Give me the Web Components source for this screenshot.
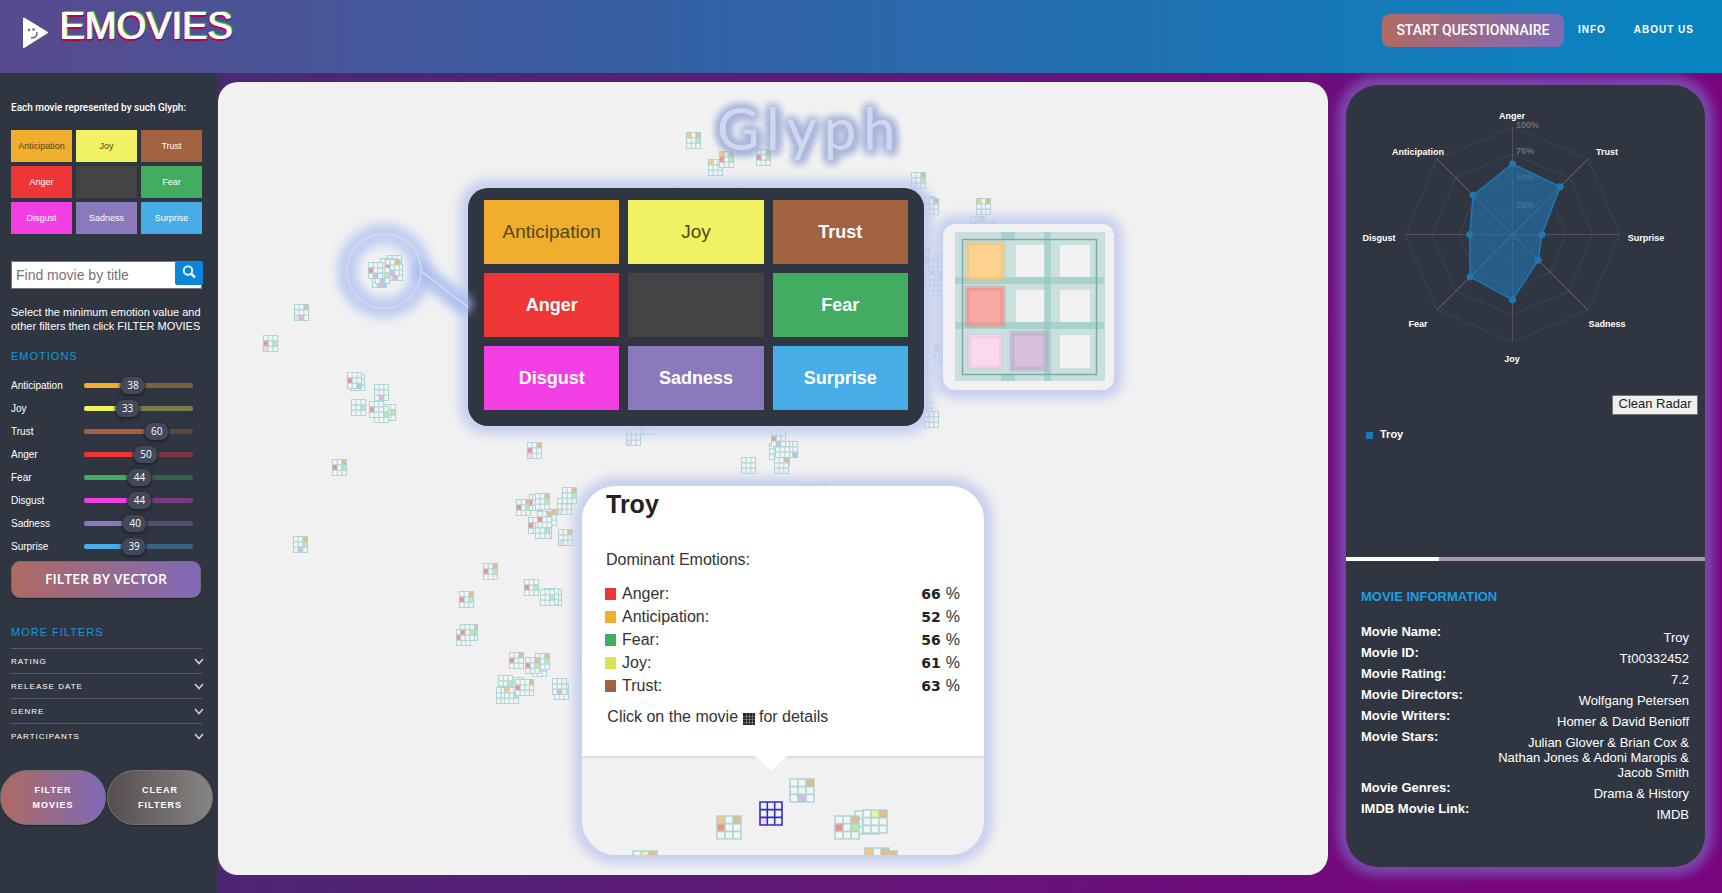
<!DOCTYPE html>
<html lang="en">
<head>
<meta charset="utf-8">
<title>EMOVIES</title>
<style>
  html, body { margin: 0; }
  body { font-family: "Liberation Sans", Arial, sans-serif; color: #fff; }
</style>
</head>
<body>
<emovies-app></emovies-app>

<template id="app">
  <style>
    :host { display: grid; grid-template-rows: 73px 1fr; min-height: 100vh; }
    main { display: grid; grid-template-columns: 217px minmax(0, 1fr) 394px; background: linear-gradient(100deg, #482a72 12%, #78067e 88%); }
    movie-map { margin: 9px 0 18px 1px; }
    .side { padding: 12px 17px 26px 18px; display: grid; }
  </style>
  <app-header></app-header>
  <main>
    <filter-sidebar></filter-sidebar>
    <movie-map></movie-map>
    <div class="side"><movie-panel></movie-panel></div>
  </main>
</template>

<template id="header">
  <style>
    :host { display: flex; justify-content: space-between; align-items: flex-start; position: relative; z-index: 1;
      background: linear-gradient(90deg, #584a8e, #3461a5 40%, #0786c2); }
    .brand { display: flex; align-items: flex-start; gap: 9px; padding-left: 20px; }
    .brand svg { margin-top: 15px; }
    h1 { margin: 6px 0 0; font-size: 38px; line-height: 40px; font-weight: 400;
      text-shadow: 1px 0 0 #fff, -1px 1px 1px #d4003c, 2px -1px 1px #28e628, 2px 1px 1px #2818e0, 0 2px 1px #c8002e; }
    nav { display: flex; align-items: center; padding: 14px 28px 0 0; }
    button { height: 33px; width: 182px; border: 0; border-radius: 8px; color: #fff; background: linear-gradient(90deg, #b06a62, #8069b8);
      font: 500 14px "Roboto", sans-serif; padding: 0 0 2px; white-space: nowrap; }
    a { color: #fff; text-decoration: none; font: bold 10px "Liberation Sans", sans-serif; letter-spacing: 1px; padding-bottom: 2px; }
    .info { margin: 0 28px 0 14px; }
  </style>
  <div class="brand">
    <svg width="30" height="36" viewBox="0 0 30 36" aria-hidden="true">
      <path d="M4 3.500 L27 17.500 L4 32z" fill="#fff" stroke="#fff" stroke-width="2" stroke-linejoin="round"/>
      <circle cx="9" cy="15" r="1.200" fill="#666"/><circle cx="13.500" cy="14.500" r="1.200" fill="#666"/>
      <path d="M11 23q6.500 0 6-6" fill="none" stroke="#555" stroke-width="1.300"/>
    </svg>
    <h1>EMOVIES</h1>
  </div>
  <nav>
    <button type="button">START QUESTIONNAIRE</button>
    <a class="info" href="#info">INFO</a>
    <a href="#about">ABOUT US</a>
  </nav>
</template>

<template id="legend">
  <style>
    :host { display: grid; grid-template-columns: repeat(3, 1fr); grid-auto-rows: var(--cell-height, 32px); gap: var(--cell-gap, 4px);
      font-size: var(--cell-font, 9px); font-weight: var(--cell-weight, 400); }
    div { display: grid; place-items: center; background: var(--c); }
    .dark { color: #54480f; font-weight: 400; font-size: var(--dark-font, 9px); }
  </style>
  <div class="dark" style="--c:#f0ae2f">Anticipation</div><div class="dark" style="--c:#f0f264">Joy</div><div style="--c:#a2623f">Trust</div>
  <div style="--c:#ef3636">Anger</div><div style="--c:#444"></div><div style="--c:#42ac60">Fear</div>
  <div style="--c:#f13fe4">Disgust</div><div style="--c:#8a7abc">Sadness</div><div style="--c:#46ade6">Surprise</div>
</template>

<template id="slider">
  <style>
    :host { display: grid; grid-template-columns: 73px 109px; align-items: center; height: 23px; font-size: 10px; }
    .bar { position: relative; height: 5px; border-radius: 2px;
      background: linear-gradient(90deg, var(--c) calc(7px + var(--v) * 1px), color-mix(in srgb, var(--c) 38%, #303641) 0); }
    input { -webkit-appearance: none; appearance: none; display: block; width: 131px; height: 17px; margin: -6px 0 0 -4px; background: none; }
    input::-webkit-slider-thumb { -webkit-appearance: none; width: 23px; height: 17px; border-radius: 7px; background: #424959; box-shadow: 0 1px 3px 1px #1d212a; }
    output { position: absolute; top: -6px; left: calc(8px + var(--v) * 1.080px); transform: translateX(-50%); font: 10px/17px "Open Sans", sans-serif; pointer-events: none; }
  </style>
  <label for="r"></label>
  <div class="bar"><input id="r" type="range" min="0" max="100"><output for="r"></output></div>
</template>

<template id="sidebar">
  <style>
    :host { display: block; box-sizing: border-box; background: #303641; padding: 26px 0 0; }
    section { padding: 0 15px 0 11px; }
    p { margin: 0; font-size: 11px; line-height: 14px; }
    .intro { font: 500 10px/17px "Roboto", sans-serif; white-space: nowrap; }
    glyph-legend { margin: 14px 0 27px; }
    form { display: flex; height: 28px; margin-bottom: 16px; background: #fff; border-radius: 2px; box-shadow: inset 0 0 0 1px #777; }
    form input { flex: 1; min-width: 0; border: 0; background: none; padding: 0 5px; font: 14px "Liberation Sans", sans-serif; }
    form input::placeholder { color: #757575; }
    form button { width: 28px; height: 24px; border: 0; border-radius: 2px; background: #0986da; padding: 0 0 2px; display: grid; place-items: center; margin-right: -1px; }
    h2 { margin: 0; font-size: 11px; line-height: 16px; font-weight: 400; letter-spacing: 1px; color: #1498d8; }
    .emotions { margin: 15px 0 10px; }
    .vector { display: block; width: 190px; height: 37px; margin: 3px 0 26px; border: 1px solid #7a6c70; border-radius: 9px; color: #fff; padding: 0 0 3px;
      background: linear-gradient(90deg, #ae6a62, #8069b8); font: 600 14px "Open Sans", sans-serif; box-shadow: 0 1px 1px #20242c; }
    .more { margin-bottom: 8px; }
    details { border-top: 1px solid #555a64; }
    summary { list-style: none; display: flex; justify-content: space-between; align-items: center; height: 24px; font-size: 8px; letter-spacing: 1px; margin-right: -2px; }
    .actions { display: flex; gap: 1px; margin-top: 22px; }
    .actions button { width: 106px; height: 55px; border: 1px solid #777; border-radius: 28px; color: #fff; font: bold 9px/15px "Liberation Sans", sans-serif; letter-spacing: 1px; padding: 0 20px; box-shadow: 0 1px 1px #20242c; }
    .actions .go { background: linear-gradient(90deg, #ae6a62, #8069b8); }
    .actions .clear { background: linear-gradient(90deg, #574e4e, #868484); }
  </style>
  <section>
    <p class="intro">Each movie represented by such Glyph:</p>
    <glyph-legend></glyph-legend>
    <form>
      <input type="search" aria-label="Find movie by title" placeholder="Find movie by title">
      <button type="button" aria-label="Search"><svg width="14" height="14" viewBox="0 0 14 14" fill="none" stroke="#dff0fc" stroke-width="2"><circle cx="6" cy="5.500" r="4.200"/><path d="M9 8.500l4 4" stroke-width="2.500"/></svg></button>
    </form>
    <p>Select the minimum emotion value and other filters then click FILTER MOVIES</p>
    <h2 class="emotions">EMOTIONS</h2>
    <emotion-slider name="Anticipation" value="38" style="--c:#f0ae2f"></emotion-slider>
    <emotion-slider name="Joy" value="33" style="--c:#f0f264"></emotion-slider>
    <emotion-slider name="Trust" value="60" style="--c:#a2623f"></emotion-slider>
    <emotion-slider name="Anger" value="50" style="--c:#ef3636"></emotion-slider>
    <emotion-slider name="Fear" value="44" style="--c:#42ac60"></emotion-slider>
    <emotion-slider name="Disgust" value="44" style="--c:#f13fe4"></emotion-slider>
    <emotion-slider name="Sadness" value="40" style="--c:#8a7abc"></emotion-slider>
    <emotion-slider name="Surprise" value="39" style="--c:#46ade6"></emotion-slider>
    <button class="vector" type="button">FILTER BY VECTOR</button>
    <h2 class="more">MORE FILTERS</h2>
    <div id="groups"></div>
  </section>
  <div class="actions">
    <button class="go" type="button">FILTER MOVIES</button>
    <button class="clear" type="button">CLEAR FILTERS</button>
  </div>
</template>

<template id="map">
  <style>
    :host { display: block; position: relative; overflow: hidden; background: #f1f1f1; border-radius: 20px; min-height: 790px; }
    svg { display: block; }
    .nodes, .lens, .title, .callout, .sample, .popup { position: absolute; }
    .nodes, .lens { left: 0; top: 0; }
    .callout, .sample, .popup { box-shadow: 0 0 10px 9px #c3cdeee6; }
    .title { left: 499px; top: 10px; margin: 0; font: 400 58px/72px "Lato", sans-serif; letter-spacing: 7px; color: #d0d8f0;
      text-shadow: 0 0 8px #a9b5dc, 0 0 8px #a9b5dc, 0 0 8px #a9b5dc, 0 0 10px #a9b5dc, 0 0 10px #a9b5dc, 0 0 12px #a9b5dc, 3px 4px 8px #8f9dcc; }
    .callout { left: 250px; top: 106px; width: 424px; padding: 12px 16px 16px; border-radius: 20px; background: #303641;
      --cell-height: 64px; --cell-gap: 9px; --cell-font: 18px; --dark-font: 19px; --cell-weight: 700; }
    .sample { left: 725px; top: 142px; width: 171px; height: 166px; border-radius: 12px; background: #f1f1f1; }
    .popup { left: 364px; top: 404px; width: 402px; height: 369px; border-radius: 34px; background: #f1f1f1; color: #333; }
    .clip { border-radius: 34px; overflow: hidden; height: 100%; }
    .info { background: #fff; height: 270px; box-sizing: border-box; padding: 4px 24px 0; box-shadow: 0 1px 3px #ccc; }
    h3 { margin: 0 0 33px; font-size: 25px; line-height: 28px; color: #222; }
    p { margin: 0; font-size: 16px; line-height: 18px; }
    dl { margin: 13px 0 11px; display: grid; grid-template-columns: 1fr auto; grid-auto-rows: 23px; row-gap: 0; font-size: 16px; line-height: 23px; }
    dd { margin: 0; }
    dd b { margin-right: 5px; font-family: "DejaVu Sans", sans-serif; font-size: 14px; line-height: 18px; color: #222; }
    dt::before { content: ""; display: inline-block; width: 11px; height: 12px; margin: 0 6px 0 -1px; vertical-align: -1px; background: var(--c); }
    p svg { display: inline-block; vertical-align: -3px; }
  </style>
  <svg class="nodes" width="1110" height="793" viewBox="218 82 1110 793" aria-hidden="true"></svg>
  <h2 class="title">Glyph</h2>
  <glyph-legend class="callout"></glyph-legend>
  <svg class="lens" width="260" height="360" viewBox="218 82 260 360" aria-hidden="true">
    <defs><filter id="b" filterUnits="userSpaceOnUse" x="300" y="200" width="200" height="150"><feGaussianBlur stdDeviation="4"/></filter></defs>
    <circle cx="384" cy="271" r="37" fill="none" stroke="#bccaf0" stroke-width="21" filter="url(#b)" opacity=".9"/>
    <path d="M421 271L462 304" stroke="#a9bcee" stroke-width="20" stroke-linecap="round" filter="url(#b)" opacity=".85"/>
    <circle cx="384" cy="271" r="37" fill="none" stroke="#d2daf3" stroke-width="1.500"/>
    <path d="M421 271L468 307" stroke="#d8def4" stroke-width="1.500"/>
  </svg>
  <div class="sample"><svg id="big" width="171" height="166" viewBox="943 224 171 166" aria-hidden="true"></svg></div>
  <div class="popup">
    <div class="clip">
      <div class="info">
        <h3>Troy</h3>
        <p>Dominant Emotions:</p>
        <dl>
          <dt style="--c:#ef3636">Anger:</dt><dd><b>66</b>%</dd>
          <dt style="--c:#f0ae2f">Anticipation:</dt><dd><b>52</b>%</dd>
          <dt style="--c:#42ac60">Fear:</dt><dd><b>56</b>%</dd>
          <dt style="--c:#dde250">Joy:</dt><dd><b>61</b>%</dd>
          <dt style="--c:#a2623f">Trust:</dt><dd><b>63</b>%</dd>
        </dl>
        <p>&hairsp;Click on the movie <svg width="12" height="12" viewBox="0 0 12 12"><path fill="#222" d="M0 0h12v12H0z"/><path d="M0 3.500h12M0 6.500h12M0 9.500h12M3.500 0v12M6.500 0v12M9.500 0v12" stroke="#999" stroke-width=".6"/></svg> for details</p>
      </div>
      <svg class="near" width="402" height="99" viewBox="582 756 402 99" aria-hidden="true"></svg>
    </div>
  </div>
</template>

<template id="panel">
  <style>
    :host { display: flex; flex-direction: column; box-sizing: border-box; background: #303641; border-radius: 32px; box-shadow: 0 0 10px 9px #7b44aa; overflow: hidden; }
    .chart { width: 100%; height: 299px; display: block; }
    .radar { display: flex; flex-direction: column; height: 472px; }
    .clean { align-self: flex-end; margin: 11px 7px 0 0; width: 86px; height: 20px; padding: 0 0 3px; border: 1px solid #777; border-radius: 1px; background: #efefef; color: #222; font: 13px "Liberation Sans", sans-serif; line-height: 14px; }
    .key { display: flex; align-items: center; gap: 7px; margin: 11px 0 0 20px; font-size: 11px; font-weight: 700; line-height: 16px; }
    .key::before { content: ""; width: 7px; height: 7px; background: #1f77b4; margin-top: 2px; }
    .scroll { height: 4px; background: linear-gradient(90deg, #fff 93px, #a99aab 0); }
    h2 { margin: 28px 15px 19px; font-size: 13px; line-height: 16px; color: #1a9fe0; }
    dl { margin: 0 16px 0 15px; display: grid; grid-template-columns: auto minmax(0, 200px); justify-content: space-between; font-size: 13px; line-height: 15px; }
    dt { font-weight: 700; }
    dd { margin: 0; padding-top: 6px; text-align: right; }
    a { color: inherit; text-decoration: none; }
    text { font-size: 9px; font-weight: 700; fill: #fff; text-anchor: middle; }
    .tick { fill: #6a6e78; text-anchor: start; }
  </style>
  <div class="radar">
    <svg class="chart" viewBox="1346 85 359 299" role="img" aria-label="Emotion radar for Troy"></svg>
    <button class="clean" type="button">Clean Radar</button>
    <div class="key">Troy</div>
  </div>
  <div class="scroll"></div>
  <h2>MOVIE INFORMATION</h2>
  <dl>
    <dt>Movie Name:</dt><dd>Troy</dd>
    <dt>Movie ID:</dt><dd>Tt00332452</dd>
    <dt>Movie Rating:</dt><dd>7.2</dd>
    <dt>Movie Directors:</dt><dd>Wolfgang Petersen</dd>
    <dt>Movie Writers:</dt><dd>Homer &amp; David Benioff</dd>
    <dt>Movie Stars:</dt><dd>Julian Glover &amp; Brian Cox &amp; Nathan Jones &amp; Adoni Maropis &amp; Jacob Smith</dd>
    <dt>Movie Genres:</dt><dd>Drama &amp; History</dd>
    <dt>IMDB Movie Link:</dt><dd><a href="#imdb">IMDB</a></dd>
  </dl>
</template>

<script>
class Base extends HTMLElement {
  constructor() {
    super();
    this.attachShadow({ mode: 'open' }).append(document.getElementById(this.constructor.tpl).content.cloneNode(true));
  }
  $(s) { return this.shadowRoot.querySelector(s); }
}

const CELL = ['#ffb84d', '#f4f07a', '#dfa765', '#fa6a62', null, '#a8e3a0', '#ffc4ea', '#caa4d8', '#8fbfe0'];

// A 3x3 movie glyph; `on` lists the indexes of the dominant emotions.
function glyph(x, y, on = '', w = 14, h = 16, line = '#a9d2d0') {
  const cw = w / 3, ch = h / 3;
  let s = `<rect x="${x}" y="${y}" width="${w}" height="${h}" fill="#f2f5f5"/>`;
  for (const d of on) s += `<rect x="${x + (d % 3) * cw}" y="${y + Math.floor(d / 3) * ch}" width="${cw}" height="${ch}" fill="${CELL[d]}" opacity=".75"/>`;
  s += `<path d="M${x} ${y}h${w}v${h}h${-w}zM${x + cw} ${y}v${h}M${x + 2 * cw} ${y}v${h}M${x} ${y + ch}h${w}M${x} ${y + 2 * ch}h${w}" fill="none" stroke="${line}" stroke-width="${w > 20 ? 1.6 : 1.1}" opacity=".9"/>`;
  return s;
}

const MOVIES = [
  [294,304,'267'],[263,335,'356'],[350,374],[347,372,'38'],[374,384,'7'],[351,399,'5'],[381,404,'5'],[374,406,'5'],[369,401,'3'],[332,459,'235'],[293,536,'257'],
  [387,255,'5'],[380,258],[388,264,'67'],[385,259,'237'],[372,271,'78'],[375,267,'57'],[368,262,'37'],
  [527,442,'236'],[638,418,'6'],[626,429,'6'],[557,498,'6'],[562,487,'25'],[516,499,'235'],[529,494,'3'],[532,494],[535,493,'25'],[528,517,'3'],[542,509,'2'],[537,522],[535,522,'5'],[537,511,'23'],[558,529,'26'],
  [483,563,'235'],[459,591,'235'],[524,579,'35'],[547,589],[544,588],[540,589,'5'],[456,629,'3'],[463,624,'25'],[460,624,'35'],
  [509,652,'23'],[532,660],[535,653,'25'],[525,657,'235'],[509,677],[498,675,'5'],[496,687],[504,687,'05'],[519,679,'2'],[515,679,'3'],[554,683,'5'],[552,678,'7'],
  [769,443],[783,441,'8'],[775,450],[775,441],[771,430,'37'],[774,457,'2'],[741,457],[800,484],[812,483,'02'],[580,656],
  [686,132,'025'],[708,159,'0'],[719,151,'0235'],[756,149,'235'],[911,172,'25'],[920,196,'23'],[924,198,'2'],[665,187],[732,187],
  [976,198,'02'],[981,221,'2'],[970,216,'123'],[915,247,'28'],[933,253],[928,261],[920,270,'2'],[933,279],[929,274,'2'],[934,345,'0'],[913,362],[917,402],[924,411]
];

class EmoviesApp extends Base { static tpl = 'app'; }
class AppHeader extends Base { static tpl = 'header'; }
class GlyphLegend extends Base { static tpl = 'legend'; }

class EmotionSlider extends Base {
  static tpl = 'slider';
  connectedCallback() {
    const input = this.$('input'), out = this.$('output');
    const show = () => { out.textContent = input.value; this.$('.bar').style.setProperty('--v', input.value); };
    this.$('label').textContent = this.getAttribute('name');
    input.value = this.getAttribute('value');
    input.addEventListener('input', show);
    show();
  }
}

class FilterSidebar extends Base {
  static tpl = 'sidebar';
  connectedCallback() {
    this.$('#groups').innerHTML = ['RATING', 'RELEASE DATE', 'GENRE', 'PARTICIPANTS'].map(t =>
      `<details><summary>${t}<svg width="10" height="7" viewBox="0 0 10 7" fill="none" stroke="#ccd0d4" stroke-width="1.500"><path d="M1 1l4 4.500L9 1"/></svg></summary></details>`).join('');
  }
}

class MovieMap extends Base {
  static tpl = 'map';
  connectedCallback() {
    this.$('.nodes').innerHTML = MOVIES.map(m => glyph(m[0] + .5, m[1] + .5, m[2])).join('');
    this.$('.near').innerHTML = '<path d="M755 756l16 15 16-15z" fill="#fff"/>' +
      glyph(790, 779, '27', 24, 23) + glyph(717, 816, '023', 24, 23) + glyph(855, 811, '', 24, 23) + glyph(863, 810, '12', 24, 23) + glyph(835, 816, '235', 24, 23) +
      glyph(633, 851, '12', 24, 23) + glyph(873, 851, '2', 24, 23) + glyph(865, 848, '02', 24, 23) + glyph(760, 802, '6', 22, 23, '#2014c4');
    let s = '<g fill="#c9e0de">';
    for (const x of [955, 1001, 1045, 1090]) s += `<rect x="${x}" y="232" width="15" height="149"/>`;
    for (const y of [232, 277, 322, 368]) s += `<rect x="955" y="${y}" width="149" height="13"/>`;
    s += '</g><g fill="#8cc4bb" fill-opacity=".5"><rect x="955" y="277" width="149" height="7"/><rect x="955" y="322" width="149" height="7"/><rect x="1001" y="232" width="14" height="7"/><rect x="1001" y="374" width="14" height="7"/><rect x="1044" y="232" width="7" height="149"/></g>';
    s += '<g stroke-width="5" stroke-opacity=".4"><path d="M967 243h36v36h-36z" fill="#fdd28f" stroke="#dcc078"/><path d="M967 288h36v37h-36z" fill="#f9a9a4" stroke="#d58580"/><path d="M969 336h32v32h-32z" fill="#fcd8ee" stroke="#dcc4dc"/><path d="M1012 333h34v36h-34z" fill="#d6c0de" stroke="#a99ac4"/></g>';
    s += '<rect x="962.500" y="239.500" width="134" height="135" fill="none" stroke="#7aaaa7" stroke-width="1.500"/>';
    this.$('#big').innerHTML = s;
  }
}

class MoviePanel extends Base {
  static tpl = 'panel';
  connectedCallback() {
    const cx = 1512.5, cy = 234.5, R = 107;
    const pt = (i, r) => [cx + Math.sin(i * Math.PI / 4) * R * r, cy - Math.cos(i * Math.PI / 4) * R * r];
    const values = [.66, .63, .275, .34, .61, .56, .4, .52];
    const ring = r => values.map((_, i) => pt(i, r)).join(' ');
    const shape = values.map((v, i) => pt(i, v));
    let s = [.25, .5, .75, 1].map(r => `<polygon points="${ring(r)}" fill="none" stroke="#3f4550"/>`).join('');
    s += values.map((_, i) => `<path d="M${cx} ${cy}L${pt(i, 1)}" stroke="${i % 2 ? '#666b76' : '#50555f'}"/>`).join('');
    s += [[100, 128], [75, 154], [50, 180], [25, 208]].map(t => `<text class="tick" x="1516" y="${t[1]}">${t[0]}%</text>`).join('');
    s += `<polygon points="${shape.join(' ')}" fill="#1f77b4" fill-opacity=".6" stroke="#1f77b4" stroke-width="1.500"/>`;
    s += shape.map(p => `<circle cx="${p[0]}" cy="${p[1]}" r="3.500" fill="#1f77b4"/>`).join('');
    s += [['Anger',1512,119],['Trust',1607,155],['Surprise',1646,241],['Sadness',1607,327],['Joy',1512,362],['Fear',1418,327],['Disgust',1379,241],['Anticipation',1418,155]]
      .map(l => `<text x="${l[1]}" y="${l[2]}">${l[0]}</text>`).join('');
    this.$('.chart').innerHTML = s;
  }
}

customElements.define('glyph-legend', GlyphLegend);
customElements.define('emotion-slider', EmotionSlider);
customElements.define('app-header', AppHeader);
customElements.define('filter-sidebar', FilterSidebar);
customElements.define('movie-map', MovieMap);
customElements.define('movie-panel', MoviePanel);
customElements.define('emovies-app', EmoviesApp);
</script>
</body>
</html>
